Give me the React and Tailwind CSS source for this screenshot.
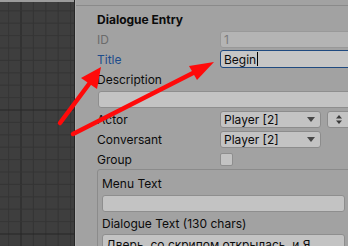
import React from 'react';

const ROWS_Y = [];
for (let k = -8; k <= 11; k++) ROWS_Y.push(110 + 12.4 * k);
const COLS_X = [-3.8, 8.6, 21, 33.4, 45.8, 58.2, 70.6];

function GraphGrid() {
  return (
    <svg width="74" height="244" className="block">
      <rect width="74" height="244" fill="#3e3e3e" />
      {COLS_X.map((x) => (
        <line key={`v${x}`} x1={x} y1="0" x2={x} y2="244" stroke={x === 21 ? '#262626' : '#353535'} strokeWidth="1" />
      ))}
      {ROWS_Y.map((y) => (
        <line key={`h${y}`} x1="0" y1={y - 2} x2="74" y2={y - 2} stroke={Math.abs(y - 110) < 0.1 || Math.abs(y - 234) < 0.2 ? '#262626' : '#353535'} strokeWidth="1" />
      ))}
    </svg>
  );
}

function Arrows() {
  return (
    <svg width="348" height="246" className="pointer-events-none absolute left-0 top-0">
      <line x1="60" y1="123" x2="89" y2="84" stroke="#ff0a0a" strokeWidth="4.5" strokeLinecap="round" />
      <polygon points="101,67 97,89 81,78" fill="#ff0a0a" />
      <line x1="73" y1="134" x2="193" y2="73" stroke="#ff0a0a" strokeWidth="4.5" strokeLinecap="round" />
      <polygon points="214,62 197,80 189,66" fill="#ff0a0a" />
    </svg>
  );
}

function Caret() {
  return (
    <svg width="8" height="5" viewBox="0 0 8 5" className="shrink-0">
      <polygon points="0,0 8,0 4,5" fill="#474747" />
    </svg>
  );
}

function Dropdown({ value }) {
  return (
    <div className="flex h-[17px] w-[101px] items-center justify-between rounded-[3px] border border-[#8c8c8c] bg-[#c3c3c3] pl-[3px] pr-[5px]">
      <span className="relative top-[1px]">{value}</span>
      <Caret />
    </div>
  );
}

function Row({ label, labelClass = '', children }) {
  return (
    <div className="flex h-[20px] items-center">
      <div className={`relative top-[1px] w-[123px] shrink-0 ${labelClass}`}>{label}</div>
      {children}
    </div>
  );
}

function Label({ children, className = '' }) {
  return (
    <div className={`flex h-[20px] items-center ${className}`}>
      <span className="relative top-[1px]">{children}</span>
    </div>
  );
}

export default function App() {
  return (
    <div className="relative flex h-[246px] w-[348px] overflow-hidden bg-[#a2a2a2] font-['Inter',sans-serif] text-[12px] leading-none text-[#0b0b0b]">
      {/* node graph */}
      <div className="flex w-[75px] shrink-0 flex-col border-r border-[#262626]">
        <div className="h-[2px] bg-[#9c9c9c]" />
        <GraphGrid />
      </div>

      {/* inspector */}
      <div className="min-w-0 flex-1 border-l border-[#acacac]">
        <div className="h-[6px] border-b border-[#8a8a8a]" />
        <div className="ml-[21px] w-[254px] pt-[3px]">
          <Label className="font-bold">Dialogue Entry</Label>

          <Row label="ID" labelClass="text-[#6b6b6b]">
            <div className="flex h-[17px] flex-1 items-center rounded-[3px] border border-[#999999] bg-[#b4b4b4] px-[3px] text-[#7c7c7c]">
              <span className="relative top-[1px]">1</span>
            </div>
          </Row>

          <Row label="Title" labelClass="text-[#1d4c8c]">
            <div className="flex h-[18px] flex-1 items-center rounded-[3px] border border-[#1f4a80] bg-[#c6c6c6] px-[3px]">
              <span className="relative top-[1px]">Begin</span>
              <span className="ml-[1px] h-[14px] w-[1px] bg-black" />
            </div>
          </Row>

          <Label>Description</Label>
          <div className="flex h-[20px] items-center pl-[1px]">
            <div className="h-[17px] flex-1 rounded-[3px] border border-[#8e8e8e] bg-[#c3c3c3]" />
          </div>

          <Row label="Actor">
            <Dropdown value="Player [2]" />
            <div className="ml-[6px] flex h-[17px] w-[24px] items-center justify-center rounded-[3px] border border-[#8c8c8c] bg-[#c3c3c3]">
              <svg width="6" height="9" viewBox="0 0 6 9">
                <polygon points="3,0 6,3.5 0,3.5" fill="#3a3a3a" />
                <polygon points="0,5.5 6,5.5 3,9" fill="#3a3a3a" />
              </svg>
            </div>
          </Row>

          <Row label="Conversant">
            <Dropdown value="Player [2]" />
          </Row>

          <Row label="Group">
            <div className="h-[13px] w-[13px] rounded-[2px] border border-[#8e8e8e] bg-[#c3c3c3]" />
          </Row>

          <div className="rounded-[3px] border border-[#8b8b8b] pl-[4px] pr-[5px] pt-[3px]">
            <Label>Menu Text</Label>
            <div className="flex h-[20px] items-center">
              <div className="h-[17px] flex-1 rounded-[3px] border border-[#8e8e8e] bg-[#c3c3c3]" />
            </div>
            <Label>Dialogue Text (130 chars)</Label>
            <div className="mt-[1px] h-[40px] rounded-[3px] border border-[#8e8e8e] bg-[#c3c3c3] px-[3px] pt-[3px] leading-[14px]">
              Дверь, со скрипом открылась, и Я
            </div>
          </div>
        </div>
      </div>

      <Arrows />
    </div>
  );
}
